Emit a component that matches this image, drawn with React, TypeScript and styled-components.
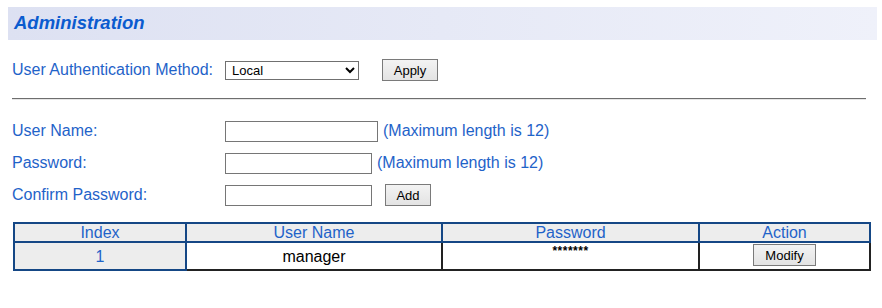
import React from 'react';
import styled, { createGlobalStyle } from 'styled-components';

const GlobalStyle = createGlobalStyle`
  body {
    margin: 0;
    background: #ffffff;
    font-family: 'Liberation Sans', Arial, sans-serif;
  }
`;

const Page = styled.div`
  width: 882px;
  height: 308px;
  padding-top: 7px;
  box-sizing: border-box;
`;

const TitleBar = styled.div`
  margin-left: 8px;
  width: 869px;
  height: 33px;
  box-sizing: border-box;
  padding-left: 6px;
  padding-bottom: 2px;
  display: flex;
  align-items: center;
  background: linear-gradient(to right, #dde1f2 0%, #e6e9f6 50%, #eff1fa 100%);
`;

const Title = styled.h1`
  margin: 0;
  font-size: 18.5px;
  font-weight: bold;
  font-style: italic;
  color: #0b5bcf;
`;

const Content = styled.div`
  padding-left: 12px;
`;

const FormRow = styled.div<{ $top: number }>`
  display: grid;
  grid-template-columns: 213px auto auto;
  align-items: center;
  justify-content: start;
  margin-top: ${(p) => p.$top}px;
  height: 24px;
`;

const Label = styled.label`
  font-size: 16px;
  line-height: 18px;
  color: #1f63c9;
`;

const Hint = styled.span<{ $gap: number }>`
  margin-left: ${(p) => p.$gap}px;
  font-size: 16px;
  line-height: 18px;
  color: #1f63c9;
`;

const Select = styled.select`
  width: 134px;
  height: 19px;
  box-sizing: border-box;
  font-family: 'Liberation Sans', Arial, sans-serif;
  font-size: 13px;
  color: #000;
  border: 1px solid #707070;
  border-radius: 0;
  background: #fff;
  padding: 0 2px;
`;

const TextInput = styled.input<{ $w: number }>`
  width: ${(p) => p.$w}px;
  height: 21px;
  box-sizing: border-box;
  border: 1px solid #767676;
  border-radius: 0;
  padding: 0 3px;
`;

const Button = styled.button<{ $gap?: number; $w: number }>`
  margin-left: ${(p) => p.$gap ?? 0}px;
  width: ${(p) => p.$w}px;
  height: 22px;
  box-sizing: border-box;
  font-family: 'Liberation Sans', Arial, sans-serif;
  font-size: 13px;
  color: #000;
  border: 1px solid #7a7a7a;
  border-radius: 0;
  background: linear-gradient(#f3f3f3, #e3e3e3);
  padding: 0;
`;

const Rule = styled.hr`
  margin: 16px 0 0 0;
  width: 854px;
  height: 0;
  border: none;
  border-top: 1px solid #6e6e6e;
  border-bottom: 1px solid #e6e6e6;
`;

const Table = styled.table`
  margin: 15px 0 0 1px;
  width: 858px;
  border-collapse: collapse;
  font-size: 16px;
  line-height: 17px;
`;

const Th = styled.th`
  height: 17px;
  padding: 0;
  font-weight: normal;
  color: #1f63c9;
  background: #ededed;
  border: 2px solid #154785;
`;

const Td = styled.td<{ $index?: boolean; $small?: boolean }>`
  height: 26px;
  padding: 0;
  text-align: center;
  vertical-align: middle;
  font-size: ${(p) => (p.$small ? '12px' : '16px')};
  color: ${(p) => (p.$index ? '#1f63c9' : '#000')};
  background: ${(p) => (p.$index ? '#ededed' : '#fff')};
  border: 2px solid ${(p) => (p.$index ? '#154785' : '#222')};
`;

const Stars = styled.span`
  position: relative;
  top: -5px;
  font-weight: bold;
  letter-spacing: 0.5px;
`;

const CellButton = styled(Button)`
  position: relative;
  top: -1px;
`;

const App: React.FC = () => {
  return (
    <Page>
      <GlobalStyle />
      <TitleBar>
        <Title>Administration</Title>
      </TitleBar>
      <Content>
        <FormRow $top={18}>
          <Label>User Authentication Method:</Label>
          <Select defaultValue="Local">
            <option>Local</option>
            <option>RADIUS</option>
            <option>TACACS+</option>
          </Select>
          <Button $gap={23} $w={56}>Apply</Button>
        </FormRow>
        <Rule />
        <FormRow $top={19}>
          <Label>User Name:</Label>
          <TextInput $w={153} />
          <Hint $gap={5}>(Maximum length is 12)</Hint>
        </FormRow>
        <FormRow $top={8}>
          <Label>Password:</Label>
          <TextInput type="password" $w={147} />
          <Hint $gap={5}>(Maximum length is 12)</Hint>
        </FormRow>
        <FormRow $top={8}>
          <Label>Confirm Password:</Label>
          <TextInput type="password" $w={147} />
          <Button $gap={13} $w={46}>Add</Button>
        </FormRow>
        <Table>
          <thead>
            <tr>
              <Th style={{ width: 170 }}>Index</Th>
              <Th style={{ width: 254 }}>User Name</Th>
              <Th style={{ width: 255 }}>Password</Th>
              <Th>Action</Th>
            </tr>
          </thead>
          <tbody>
            <tr>
              <Td $index>1</Td>
              <Td>manager</Td>
              <Td $small>
                <Stars>*******</Stars>
              </Td>
              <Td>
                <CellButton $w={63}>Modify</CellButton>
              </Td>
            </tr>
          </tbody>
        </Table>
      </Content>
    </Page>
  );
};

export default App;
